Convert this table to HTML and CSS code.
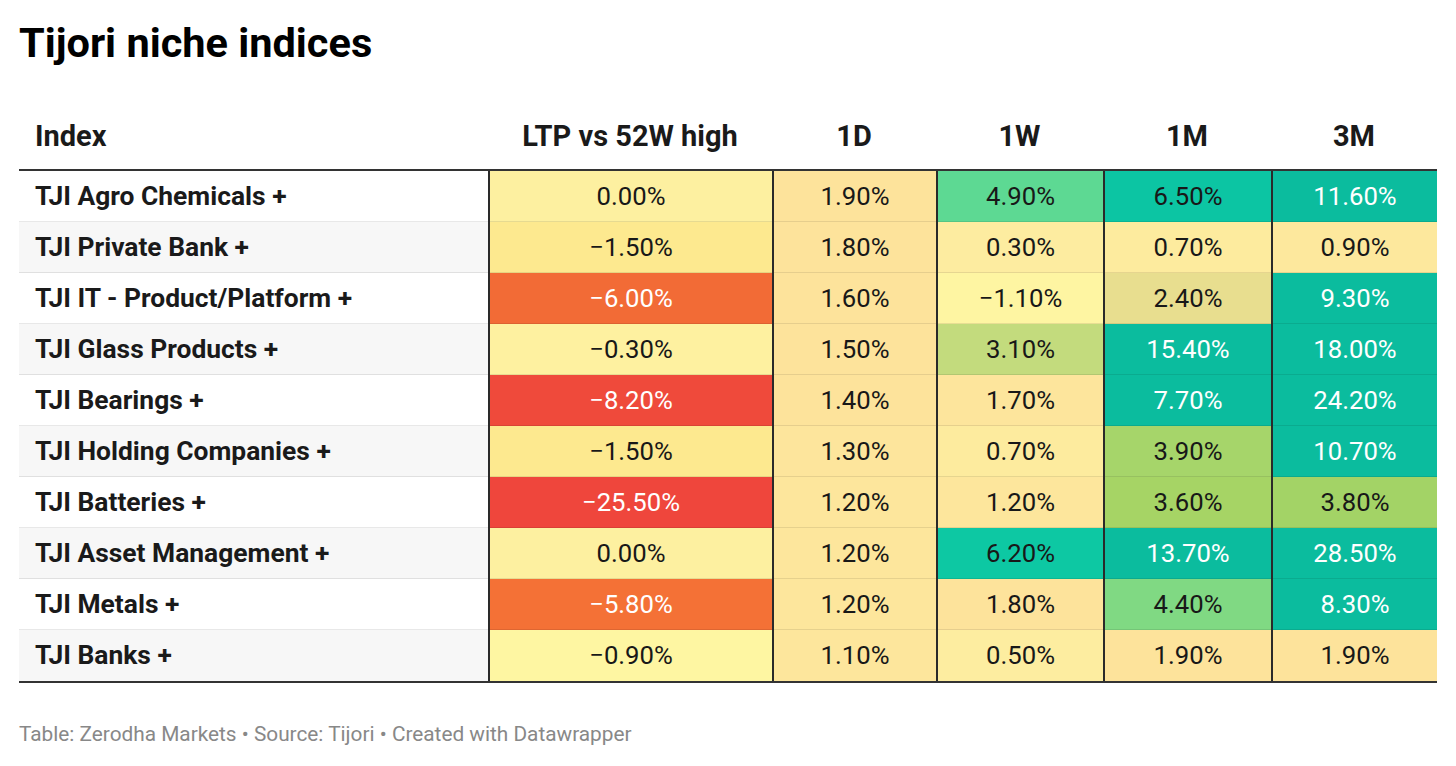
FILE: index.html
```html
<!DOCTYPE html>
<html lang="en">
<head>
<meta charset="utf-8">
<title>Tijori niche indices</title>
<link rel="stylesheet" href="styles.css">
</head>
<body>
<div class="chart">
  <h1 class="title">Tijori niche indices</h1>
  <div class="table">
    <div class="row head">
      <div class="cell label">Index</div>
      <div class="cell">LTP vs 52W high</div>
      <div class="cell">1D</div>
      <div class="cell">1W</div>
      <div class="cell">1M</div>
      <div class="cell">3M</div>
    </div>
    <div class="row">
      <div class="cell label">TJI Agro Chemicals +</div>
      <div class="cell val y0">0.00%</div>
      <div class="cell val o1">1.90%</div>
      <div class="cell val g49">4.90%</div>
      <div class="cell val t65">6.50%</div>
      <div class="cell val tw">11.60%</div>
    </div>
    <div class="row alt">
      <div class="cell label">TJI Private Bank +</div>
      <div class="cell val y15">−1.50%</div>
      <div class="cell val o1">1.80%</div>
      <div class="cell val y03">0.30%</div>
      <div class="cell val y07">0.70%</div>
      <div class="cell val y09">0.90%</div>
    </div>
    <div class="row">
      <div class="cell label">TJI IT - Product/Platform +</div>
      <div class="cell val r6 light">−6.00%</div>
      <div class="cell val o1">1.60%</div>
      <div class="cell val yn1">−1.10%</div>
      <div class="cell val ol24">2.40%</div>
      <div class="cell val tw">9.30%</div>
    </div>
    <div class="row alt">
      <div class="cell label">TJI Glass Products +</div>
      <div class="cell val y03n">−0.30%</div>
      <div class="cell val o1">1.50%</div>
      <div class="cell val gl31">3.10%</div>
      <div class="cell val tw">15.40%</div>
      <div class="cell val tw">18.00%</div>
    </div>
    <div class="row">
      <div class="cell label">TJI Bearings +</div>
      <div class="cell val r8 light">−8.20%</div>
      <div class="cell val o1">1.40%</div>
      <div class="cell val o2">1.70%</div>
      <div class="cell val tw">7.70%</div>
      <div class="cell val tw">24.20%</div>
    </div>
    <div class="row alt">
      <div class="cell label">TJI Holding Companies +</div>
      <div class="cell val y15">−1.50%</div>
      <div class="cell val o2">1.30%</div>
      <div class="cell val y07">0.70%</div>
      <div class="cell val gl39">3.90%</div>
      <div class="cell val tw">10.70%</div>
    </div>
    <div class="row">
      <div class="cell label">TJI Batteries +</div>
      <div class="cell val r25 light">−25.50%</div>
      <div class="cell val o3">1.20%</div>
      <div class="cell val o3">1.20%</div>
      <div class="cell val gl36">3.60%</div>
      <div class="cell val gl38">3.80%</div>
    </div>
    <div class="row alt">
      <div class="cell label">TJI Asset Management +</div>
      <div class="cell val y0">0.00%</div>
      <div class="cell val o3">1.20%</div>
      <div class="cell val t62">6.20%</div>
      <div class="cell val tw">13.70%</div>
      <div class="cell val tw">28.50%</div>
    </div>
    <div class="row">
      <div class="cell label">TJI Metals +</div>
      <div class="cell val r58 light">−5.80%</div>
      <div class="cell val o3">1.20%</div>
      <div class="cell val o1">1.80%</div>
      <div class="cell val g44">4.40%</div>
      <div class="cell val tw">8.30%</div>
    </div>
    <div class="row alt last">
      <div class="cell label">TJI Banks +</div>
      <div class="cell val yn09">−0.90%</div>
      <div class="cell val o3">1.10%</div>
      <div class="cell val y05">0.50%</div>
      <div class="cell val o1">1.90%</div>
      <div class="cell val o1">1.90%</div>
    </div>
  </div>
  <p class="footer">Table: Zerodha Markets • Source: Tijori • Created with Datawrapper</p>
</div>
</body>
</html>
```

FILE: styles.css
```css
* { box-sizing: border-box; }

html, body {
  margin: 0;
  padding: 0;
  background: #fff;
}

body {
  font-family: Roboto, "Liberation Sans", sans-serif;
  color: #181818;
}

.chart {
  padding: 18px 19px 0 19px;
  width: 1456px;
}

.title {
  margin: 0;
  font-size: 41.5px;
  line-height: 50px;
  font-weight: 700;
  color: #000;
}

.table {
  width: 1418px;
}

.row {
  display: grid;
  grid-template-columns: 469px 284px 164px 167px 168px 166px;
  background: #fff;
}

.row.alt {
  background: #f7f7f7;
}

.cell {
  height: 51px;
  line-height: 51px;
  font-size: 25.7px;
  text-align: center;
  box-shadow: inset 0 -1px 0 rgba(0, 0, 0, 0.09);
  white-space: nowrap;
}

.cell.label {
  text-align: left;
  padding-left: 16px;
  font-size: 26.4px;
  font-weight: 700;
  color: #1a1a1a;
}

.cell.val {
  border-left: 2px solid #2a2a2a;
  font-weight: 400;
}

.row.head {
  border-bottom: 2px solid #333;
}

.row.head .cell {
  height: auto;
  font-size: 29px;
  line-height: 34px;
  padding-top: 51px;
  padding-bottom: 16px;
  font-weight: 700;
  box-shadow: none;
  color: #1a1a1a;
}

.row.head .cell.label {
  padding-left: 16px;
}

.row.last {
  border-bottom: 2px solid #333;
}

.row.last .cell {
  box-shadow: none;
}

.light { color: #fff; }
.tw { background: #0bbc9e; color: #fff; }

/* yellows */
.y0 { background: #fdf0a0; }
.y15 { background: #fde98f; }
.y03n { background: #fef1a0; }
.yn09 { background: #fef6a2; }
.y03 { background: #fdeca0; }
.y05 { background: #fdeda0; }
.y07 { background: #fdeb9e; }
.y09 { background: #fde89d; }
.yn1 { background: #fef5a2; }

/* oranges / beige */
.o1 { background: #fde39b; }
.o2 { background: #fde59c; }
.o3 { background: #fde69c; }

/* reds */
.r6 { background: #f26b36; }
.r58 { background: #f47136; }
.r8 { background: #ef4a3b; }
.r25 { background: #ef463c; }

/* greens */
.ol24 { background: #e8de8f; }
.gl31 { background: #c3db7d; }
.gl36 { background: #a6d465; }
.gl38 { background: #a3d366; }
.gl39 { background: #a6d56a; }
.g44 { background: #80d983; }
.g49 { background: #5dd993; }
.t62 { background: #0dc8a3; }
.t65 { background: #0cc5a3; }

.footer {
  margin: 39px 0 0 0;
  font-size: 20.8px;
  line-height: 24px;
  color: #888;
}
```
